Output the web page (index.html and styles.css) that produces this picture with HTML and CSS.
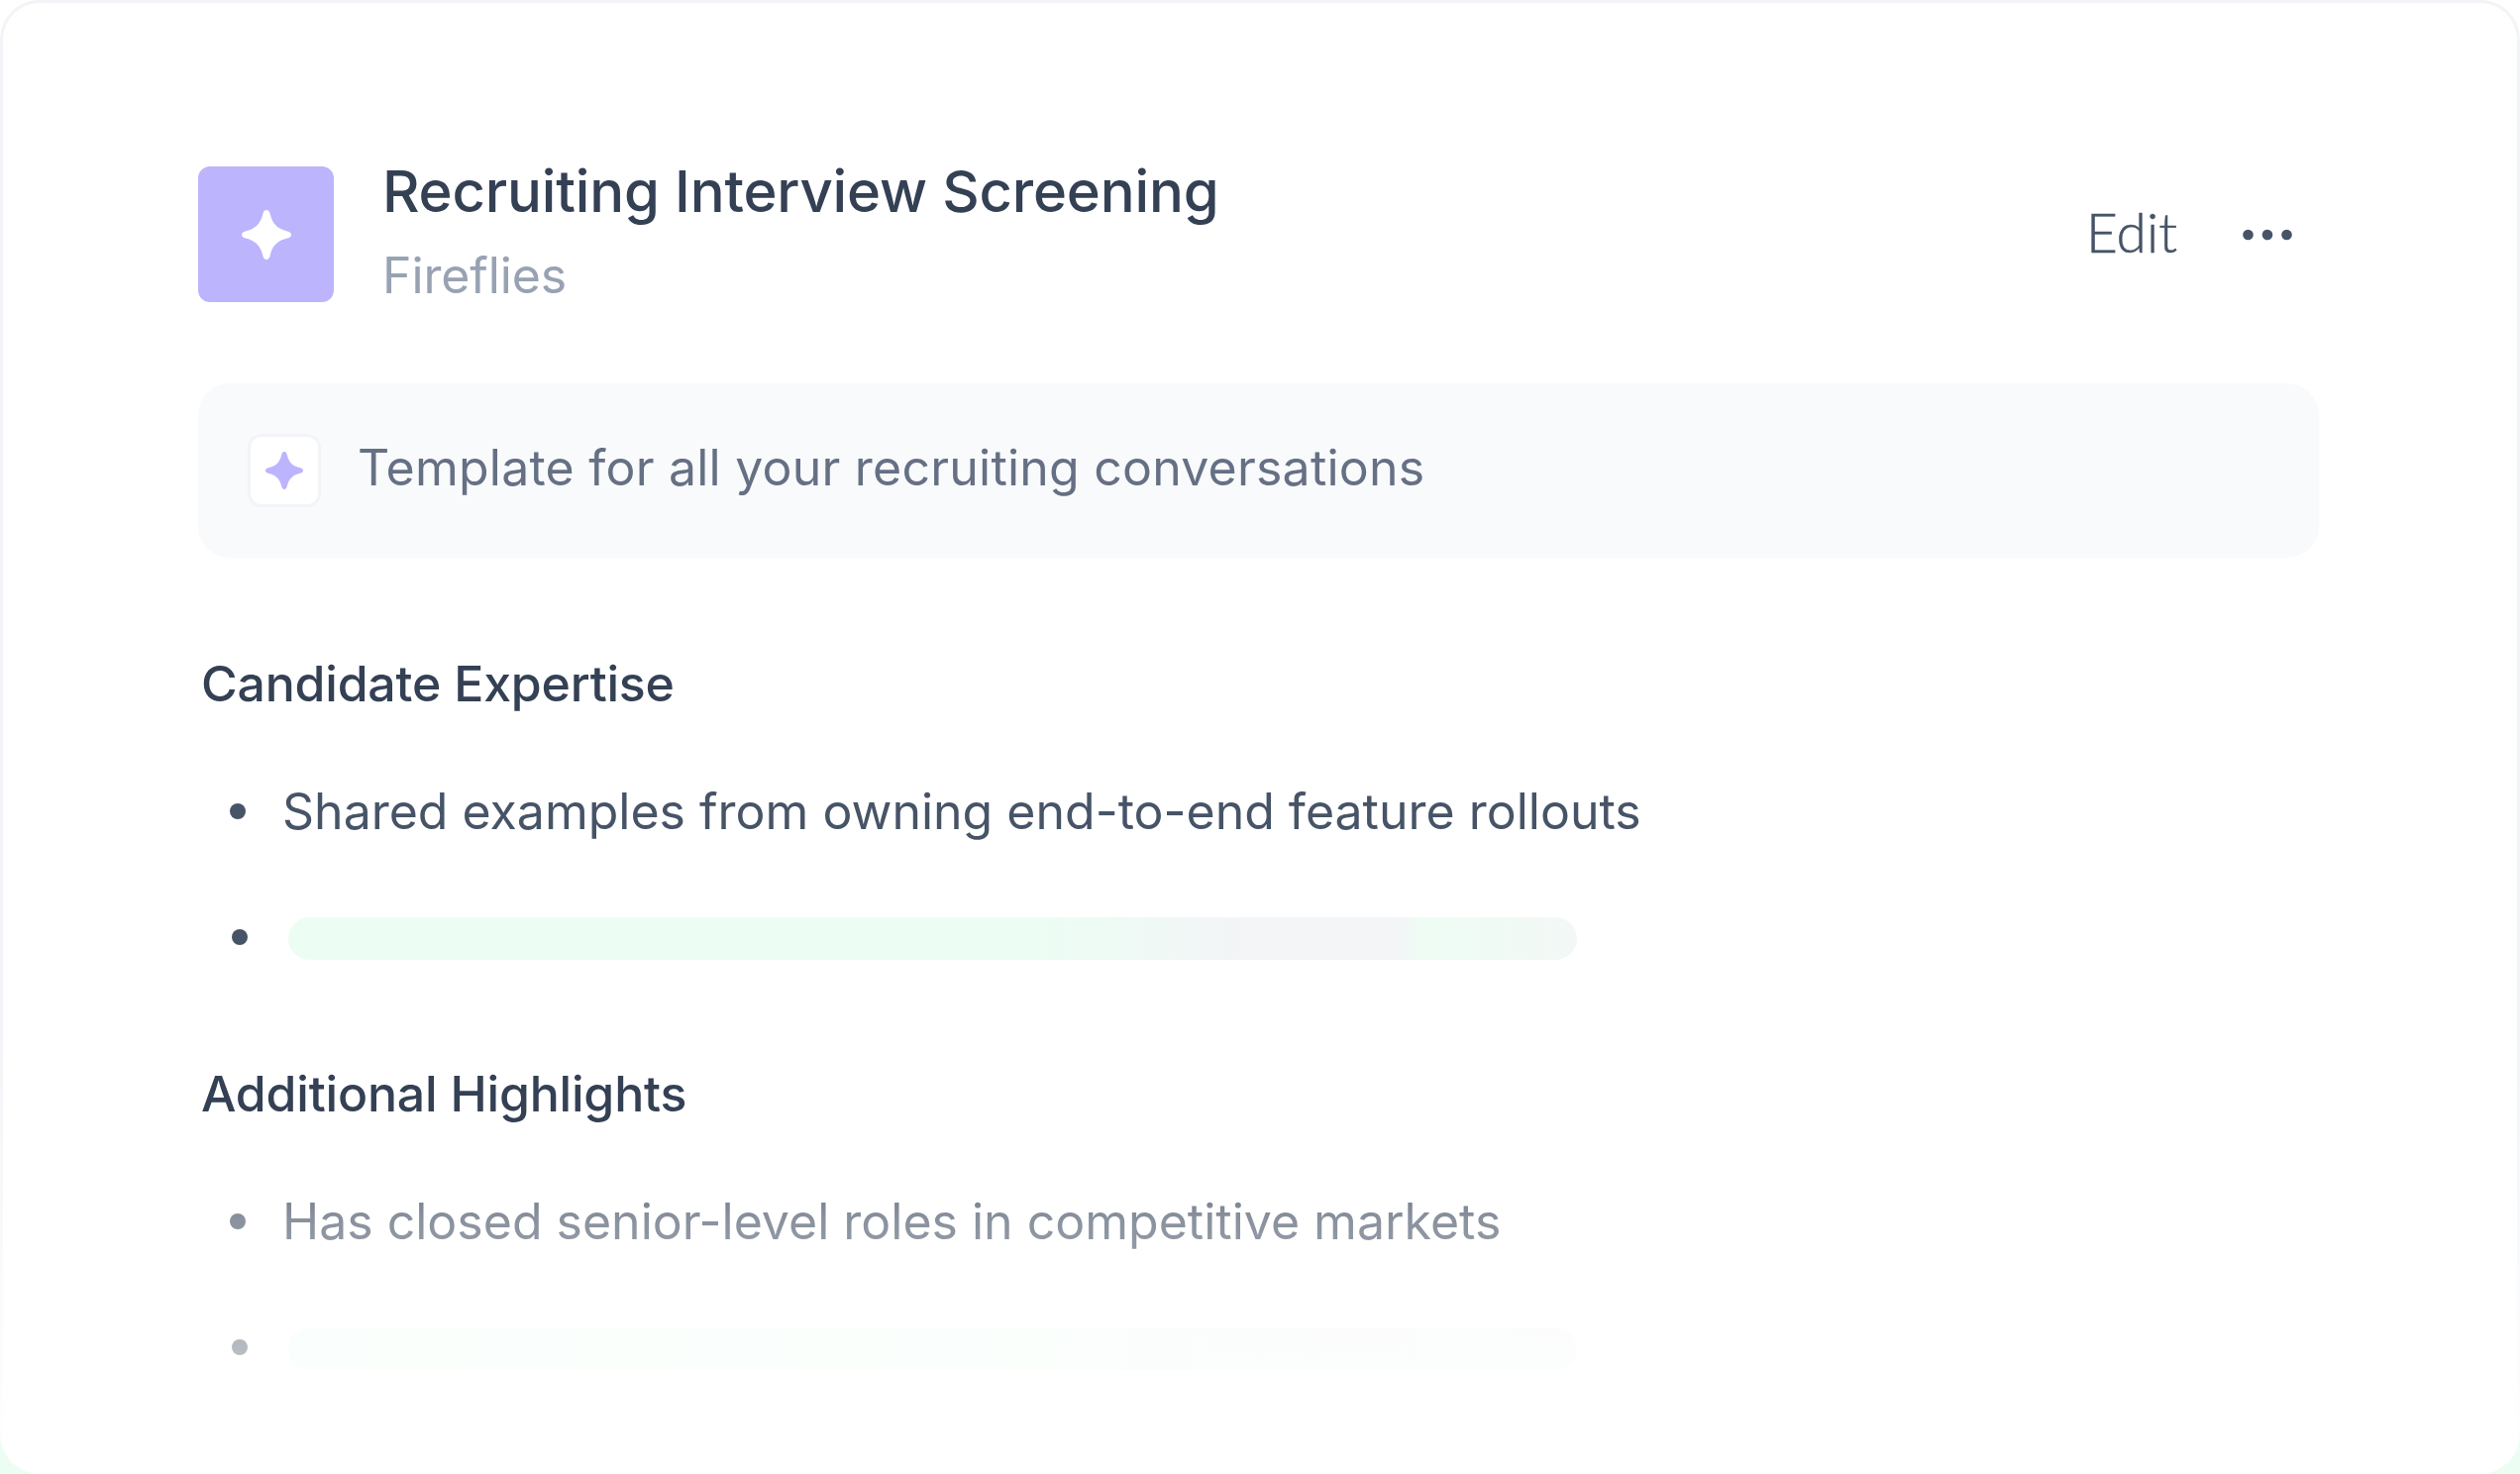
FILE: index.html
```html
<!DOCTYPE html>
<html lang="en">
<head>
<meta charset="utf-8">
<title>Recruiting Interview Screening</title>
<link rel="stylesheet" href="styles.css">
</head>
<body>
<main class="card">
  <header class="header">
    <div class="logo">
      <svg class="star" viewBox="0 0 50 50"><path d="M25 0c2 0 3 1.500 3.600 3.800C31 14 36 19 46.200 21.400 48.500 22 50 23 50 25s-1.500 3-3.800 3.600C36 31 31 36 28.600 46.200 28 48.500 27 50 25 50s-3-1.500-3.600-3.800C19 36 14 31 3.800 28.600 1.500 28 0 27 0 25s1.500-3 3.800-3.600C14 19 19 14 21.400 3.800 22 1.500 23 0 25 0z" fill="#fff"/></svg>
    </div>
    <div class="titles">
      <h1 class="title">Recruiting Interview Screening</h1>
      <p class="subtitle">Fireflies</p>
    </div>
    <div class="actions">
      <span class="edit">Edit</span>
      <svg class="more" viewBox="0 0 50 12"><circle cx="5.500" cy="6" r="5.300" fill="#475467"/><circle cx="25" cy="6" r="5.300" fill="#475467"/><circle cx="44.500" cy="6" r="5.300" fill="#475467"/></svg>
    </div>
  </header>
  <section class="callout">
    <div class="callout-icon">
      <svg class="star-small" viewBox="0 0 50 50"><path d="M25 0c2 0 3 1.500 3.600 3.800C31 14 36 19 46.200 21.400 48.500 22 50 23 50 25s-1.500 3-3.800 3.600C36 31 31 36 28.600 46.200 28 48.500 27 50 25 50s-3-1.500-3.600-3.800C19 36 14 31 3.800 28.600 1.500 28 0 27 0 25s1.500-3 3.800-3.600C14 19 19 14 21.400 3.800 22 1.500 23 0 25 0z" fill="#bdb4fe"/></svg>
    </div>
    <p class="callout-text">Template for all your recruiting conversations</p>
  </section>
  <h2 class="heading heading-first">Candidate Expertise</h2>
  <ul class="list">
    <li class="item"><span class="dot"></span><span class="text">Shared examples from owning end-to-end feature rollouts</span></li>
    <li class="item item-bar"><span class="dot dot-bar"></span><span class="bar"></span></li>
  </ul>
  <h2 class="heading heading-second">Additional Highlights</h2>
  <ul class="list">
    <li class="item"><span class="dot"></span><span class="text">Has closed senior-level roles in competitive markets</span></li>
    <li class="item item-bar"><span class="dot dot-bar"></span><span class="bar bar-faint"></span></li>
  </ul>
  <div class="fade"></div>
</main>
</body>
</html>
```
FILE: styles.css
```css
* { box-sizing: border-box; }
html, body { margin: 0; height: 100%; }
body {
  width: 2544px;
  height: 1488px;
  overflow: hidden;
  background: linear-gradient(180deg, #fff 60%, #ecfdf3 100%);
  font-family: Inter, "Liberation Sans", sans-serif;
}
.card {
  position: relative;
  width: 2544px;
  height: 1488px;
  padding: 165px 200px 0 197px;
  border: 3px solid transparent;
  border-radius: 40px;
  background: linear-gradient(#fff, #fff) padding-box, linear-gradient(180deg, #f2f4f7 70%, #fff 100%) border-box;
  overflow: hidden;
}
.header { display: flex; align-items: center; height: 137px; }
.logo {
  width: 137px;
  height: 137px;
  flex: none;
  display: flex;
  align-items: center;
  justify-content: center;
  background: #bdb4fe;
  border-radius: 12px;
}
.star { width: 50px; height: 50px; }
.titles { margin-left: 49px; flex: 1; }
.title { margin: -10px 0 0; font-size: 58px; font-weight: 500; line-height: 72px; letter-spacing: -.17px; color: #344054; }
.subtitle { margin: 21px 0 0; font-size: 50px; font-weight: 400; line-height: 56px; letter-spacing: -.1px; color: #98a2b3; }
.actions { display: flex; align-items: center; gap: 66px; margin-right: 27px; }
.edit { margin-top: -5px; font-family: Lato, sans-serif; font-size: 55px; font-weight: 300; line-height: 60px; color: #475467; -webkit-text-stroke: .5px #475467; }
.more { width: 50px; height: 12px; }
.callout {
  display: flex;
  align-items: center;
  height: 176px;
  margin-top: 82px;
  padding-left: 50px;
  background: #f9fafb;
  border-radius: 32px;
}
.callout-icon {
  width: 74px;
  height: 74px;
  flex: none;
  display: flex;
  align-items: center;
  justify-content: center;
  background: #fff;
  border: 3px solid #f2f4f7;
  border-radius: 14px;
}
.star-small { width: 38px; height: 38px; }
.callout-text { margin: 0 0 6px 37px; font-size: 50px; line-height: 58px; letter-spacing: .22px; color: #667085; }
.heading { margin: 0 0 0 3px; font-size: 50px; font-weight: 500; line-height: 62px; letter-spacing: -.2px; color: #344054; }
.heading-first { margin-top: 96px; }
.heading-second { margin-top: 104px; }
.list { list-style: none; margin: 0; padding: 0; }
.item { display: flex; align-items: center; height: 60px; margin-top: 68px; }
.item-bar { height: 44px; margin-top: 76px; }
.dot { width: 16px; height: 16px; margin-left: 32px; flex: none; border-radius: 50%; background: #475467; }
.dot-bar { margin-left: 34px; margin-bottom: 2px; }
.text { margin-left: 37px; font-size: 50px; line-height: 60px; color: #475467; }
.bar {
  width: 1301px;
  height: 43px;
  margin-left: 41px;
  border-radius: 22px;
  background: linear-gradient(90deg, #ecfdf3 0%, #ecfdf3 58%, #f3f5f7 74%, #f3f5f7 86%, #eefcf4 88%, #f3f8f6 100%);
}
.bar-faint { opacity: .6; }
.fade {
  position: absolute;
  left: 0;
  right: 0;
  top: 1130px;
  bottom: 0;
  background: linear-gradient(180deg, rgba(255,255,255,0) 0%, rgba(255,255,255,.36) 28%, rgba(255,255,255,.6) 64%, rgba(255,255,255,.8) 100%);
  pointer-events: none;
}
```
